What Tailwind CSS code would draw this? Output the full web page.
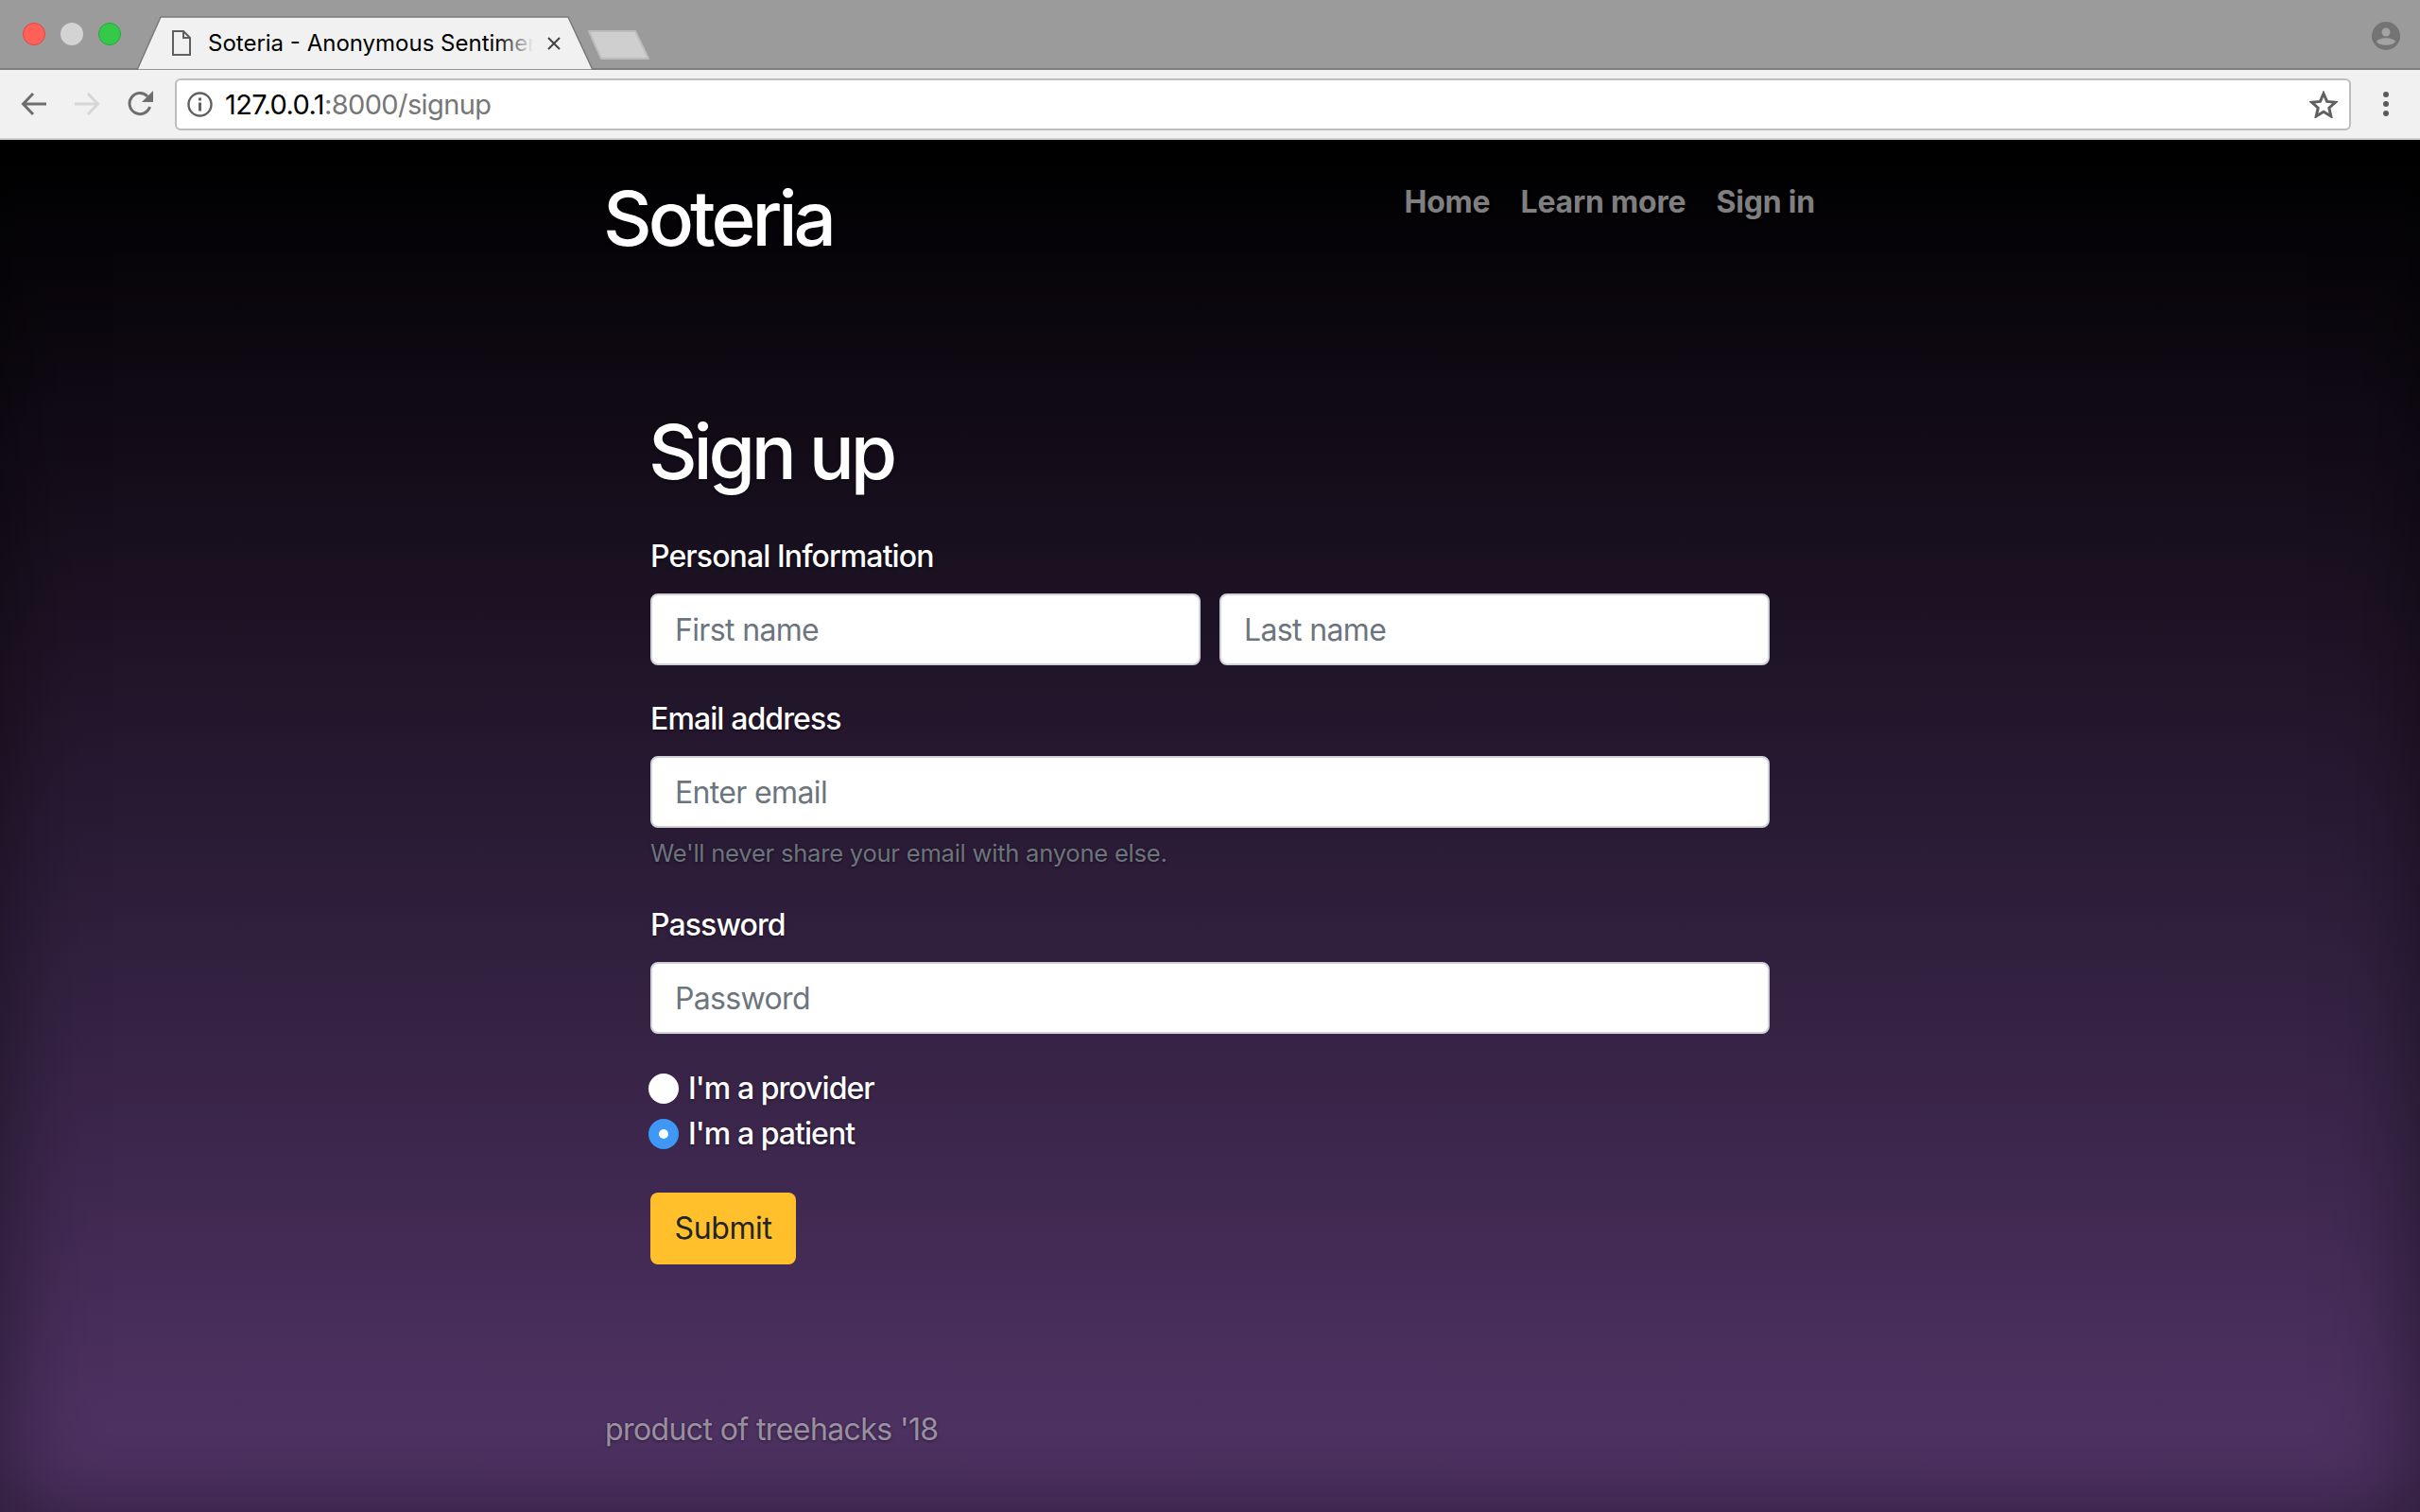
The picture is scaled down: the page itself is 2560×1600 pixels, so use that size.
<!DOCTYPE html>
<html lang="en">
<head>
    <meta charset="UTF-8">
    <title>Soteria - Anonymous Sentiment</title>
    <script src="https://cdn.jsdelivr.net/npm/@tailwindcss/browser@4"></script>
</head>
<body class="w-[2560px] h-[1600px] overflow-hidden font-['Inter',sans-serif] text-white bg-black">
    <!-- browser chrome -->
    <div class="relative h-[74px] bg-[#9b9b9b] border-b-2 border-[#7d7d7d] flex items-center px-6 gap-4">
        <span class="w-6 h-6 rounded-full bg-[#ff6159] border border-[#e2463f]"></span>
        <span class="w-6 h-6 rounded-full bg-[#d3d3d3]"></span>
        <span class="w-6 h-6 rounded-full bg-[#35c94a] border border-[#27a839]"></span>
        <svg class="absolute left-[140px] top-[15px]" width="560" height="61" viewBox="0 0 560 61">
            <path d="M5 59 L30 3 H461 L487 59 Z" fill="#f1f1f1" stroke="#7a7a7a" stroke-width="1.5"/>
            <rect x="0" y="59" width="490" height="3" fill="#f1f1f1"/>
            <path d="M483 18 H532 L546 47 H496 Z" fill="#cfcfcf" stroke="#bdbdbd" stroke-width="2" stroke-linejoin="round"/>
        </svg>
        <svg class="absolute left-[182px] top-[32px]" width="20" height="27" viewBox="0 0 20 27" fill="none" stroke="#5f5f5f" stroke-width="2">
            <path d="M1 1 H12 L19 8 V26 H1 Z M12 1 V8 H19"/>
        </svg>
        <div class="absolute left-[220px] top-[28px] w-[349px] h-[36px] overflow-hidden whitespace-nowrap text-[24px] leading-[36px] text-black">Soteria - Anonymous Sentiment</div>
        <div class="absolute left-[525px] top-[28px] w-[44px] h-[36px] bg-[linear-gradient(to_right,rgba(241,241,241,0),#f1f1f1_90%)]"></div>
        <svg class="absolute left-[579px] top-[39px]" width="14" height="14" viewBox="0 0 14 14" stroke="#444" stroke-width="2"><path d="M1 1 L13 13 M13 1 L1 13"/></svg>
        <svg class="absolute left-[2509px] top-[23px]" width="30" height="30" viewBox="0 0 30 30">
            <circle cx="15" cy="15" r="15" fill="#747474"/>
            <circle cx="15" cy="11" r="4.5" fill="#a3a3a3"/>
            <path d="M5 21 C8 16 22 16 25 21 C22 26 8 26 5 21 Z" fill="#a3a3a3"/>
        </svg>
    </div>
    <div class="h-[74px] bg-[#f1f1f1] border-b-2 border-[#d0d0d0] flex items-center relative">
        <svg class="ml-[22px] shrink-0" width="28" height="26" viewBox="0 0 28 26" fill="none" stroke="#6e6e6e" stroke-width="3"><path d="M27 13 H3 M13 2 L2.5 13 L13 24"/></svg>
        <svg class="ml-[28px] shrink-0" width="28" height="26" viewBox="0 0 28 26" fill="none" stroke="#d6d6d6" stroke-width="3"><path d="M1 13 H25 M15 2 L25.5 13 L15 24"/></svg>
        <svg class="ml-[29px] shrink-0" width="28" height="28" viewBox="0 0 28 28" fill="none"><path d="M23.5 17 A11 11 0 1 1 21 6" stroke="#6e6e6e" stroke-width="3"/><path d="M27 0 V12 H15 Z" fill="#6e6e6e"/></svg>
        <div class="ml-[22px] w-[2302px] h-[55px] bg-white border-2 border-[#bdbdbd] rounded-[6px] flex items-center">
            <svg class="ml-[11px] shrink-0" width="27" height="27" viewBox="0 0 27 27" fill="none"><circle cx="13.5" cy="13.5" r="12" stroke="#606060" stroke-width="2.4"/><rect x="12" y="11.5" width="3" height="9" fill="#606060"/><rect x="12" y="6.5" width="3" height="3" fill="#606060"/></svg>
            <span class="ml-[13px] pt-[2px] text-[29px] tracking-[-0.6px] text-black">127.0.0.1<span class="text-[#777]">:8000/signup</span></span>
            <svg class="ml-auto mr-[12px]" width="30" height="29" viewBox="0 0 30 29" fill="none"><path d="M15 3 L18.6 11.4 L27.6 12.2 L20.8 18.2 L22.8 27 L15 22.3 L7.2 27 L9.2 18.2 L2.4 12.2 L11.4 11.4 Z" stroke="#606060" stroke-width="3"/></svg>
        </div>
        <div class="ml-[34px] flex flex-col gap-[4px]">
            <span class="w-[6px] h-[6px] rounded-full bg-[#5a5a5a]"></span>
            <span class="w-[6px] h-[6px] rounded-full bg-[#5a5a5a]"></span>
            <span class="w-[6px] h-[6px] rounded-full bg-[#5a5a5a]"></span>
        </div>
    </div>

    <!-- page -->
    <div class="h-[1452px] bg-[linear-gradient(#000,#533569)] shadow-[inset_0_0_100px_rgba(0,0,0,0.5)] [text-shadow:0_1px_3px_rgba(0,0,0,0.5)]">
        <div class="w-[1280px] h-full mx-auto flex flex-col">
            <header class="flex justify-between items-start pt-[35px]">
                <h3 class="-ml-[2px] text-[80px] leading-[96px] font-medium tracking-[-4px]">Soteria</h3>
                <nav class="flex gap-[32px] pt-[7px] text-[32px] leading-[48px] font-bold tracking-[-0.2px] text-white/50">
                    <a>Home</a>
                    <a>Learn more</a>
                    <a>Sign in</a>
                </nav>
            </header>
            <form class="w-[1184px] mx-auto mt-[151px] flex flex-col">
                <h1 class="-ml-[2px] text-[80px] leading-[96px] font-medium tracking-[-4.2px]">Sign up</h1>
                <label class="mt-[39px] text-[32px] leading-[48px] font-medium tracking-[-0.9px]">Personal Information</label>
                <div class="mt-[15px] flex gap-[20px]">
                    <input type="text" placeholder="First name" class="w-[582px] h-[76px] px-[24px] bg-white border-2 border-[#ced4da] rounded-[8px] text-[32px] tracking-[-0.65px] placeholder:text-[#6c757d]">
                    <input type="text" placeholder="Last name" class="w-[582px] h-[76px] px-[24px] bg-white border-2 border-[#ced4da] rounded-[8px] text-[32px] tracking-[-0.65px] placeholder:text-[#6c757d]">
                </div>
                <label class="mt-[33px] text-[32px] leading-[48px] font-medium tracking-[-0.9px]">Email address</label>
                <input type="email" placeholder="Enter email" class="mt-[15px] w-full h-[76px] px-[24px] bg-white border-2 border-[#ced4da] rounded-[8px] text-[32px] tracking-[-0.65px] placeholder:text-[#6c757d]">
                <small class="mt-[8px] text-[25.6px] leading-[38px] tracking-[-0.25px] text-[#6c757d]">We'll never share your email with anyone else.</small>
                <label class="mt-[33px] text-[32px] leading-[48px] font-medium tracking-[-0.9px]">Password</label>
                <input type="password" placeholder="Password" class="mt-[15px] w-full h-[76px] px-[24px] bg-white border-2 border-[#ced4da] rounded-[8px] text-[32px] tracking-[-0.65px] placeholder:text-[#6c757d]">
                <div class="mt-[34px] flex items-center h-[48px] gap-[10px] text-[32px] font-medium tracking-[-0.95px]">
                    <span class="w-[32px] h-[32px] rounded-full bg-white -ml-[2px]"></span>
                    <span>I'm a provider</span>
                </div>
                <div class="flex items-center h-[48px] gap-[10px] text-[32px] font-medium tracking-[-0.95px]">
                    <span class="w-[32px] h-[32px] rounded-full bg-[#3f97f6] -ml-[2px] flex items-center justify-center"><span class="w-[10px] h-[10px] rounded-full bg-white"></span></span>
                    <span>I'm a patient</span>
                </div>
                <button type="button" class="mt-[38px] w-[154px] h-[76px] rounded-[8px] bg-[#ffc02b] text-[#212529] text-[32px] tracking-[-0.4px] [text-shadow:none]">Submit</button>
            </form>
            <footer class="mt-auto pb-[63px] text-[32px] leading-[48px] tracking-[-0.6px] text-white/50">product of treehacks '18</footer>
        </div>
    </div>
</body>
</html>
